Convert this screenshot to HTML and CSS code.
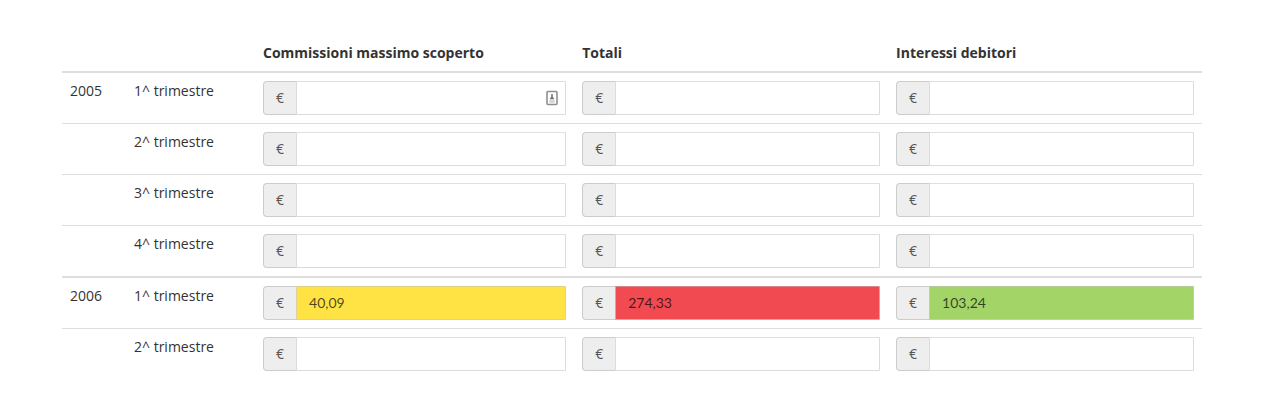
FILE: index.html
```html
<!DOCTYPE html>
<html lang="it">

<head>
	<meta charset="UTF-8">
	<meta name="viewport" content="width=device-width, initial-scale=1.0">
	<title>Trimestri</title>
	<link rel="stylesheet" href="styles.css">
</head>

<body>
	<table class="table">
		<colgroup>
			<col class="col-year">
			<col class="col-quarter">
			<col class="col-fees">
			<col>
			<col>
		</colgroup>
		<thead>
			<tr>
				<th></th>
				<th></th>
				<th>Commissioni massimo scoperto</th>
				<th>Totali</th>
				<th>Interessi debitori</th>
			</tr>
		</thead>
		<tbody>
			<tr>
				<td>2005</td>
				<td>1^ trimestre</td>
				<td>
					<div class="input-group">
						<label class="addon" for="fees-2005-1">€</label>
						<input type="text" class="form-control" id="fees-2005-1">
						<svg class="autofill" width="12" height="16" viewBox="0 0 12 16">
							<rect x="1" y="1.5" width="10" height="13" rx="1" fill="#fff" stroke="#8f8f8f" stroke-width="1.6" />
							<path d="M6 4v3" stroke="#777" stroke-width="1.6" />
							<path d="M3.8 9l1.2-2.2h2l1.2 2.2z" fill="#777" />
							<path d="M3.5 10h5M3.5 12h5" stroke="#aaa" stroke-width="1" />
						</svg>
					</div>
				</td>
				<td>
					<div class="input-group">
						<label class="addon" for="total-2005-1">€</label>
						<input type="text" class="form-control" id="total-2005-1">
					</div>
				</td>
				<td>
					<div class="input-group">
						<label class="addon" for="interest-2005-1">€</label>
						<input type="text" class="form-control" id="interest-2005-1">
					</div>
				</td>
			</tr>
			<tr>
				<td></td>
				<td>2^ trimestre</td>
				<td>
					<div class="input-group">
						<label class="addon" for="fees-2005-2">€</label>
						<input type="text" class="form-control" id="fees-2005-2">
					</div>
				</td>
				<td>
					<div class="input-group">
						<label class="addon" for="total-2005-2">€</label>
						<input type="text" class="form-control" id="total-2005-2">
					</div>
				</td>
				<td>
					<div class="input-group">
						<label class="addon" for="interest-2005-2">€</label>
						<input type="text" class="form-control" id="interest-2005-2">
					</div>
				</td>
			</tr>
			<tr>
				<td></td>
				<td>3^ trimestre</td>
				<td>
					<div class="input-group">
						<label class="addon" for="fees-2005-3">€</label>
						<input type="text" class="form-control" id="fees-2005-3">
					</div>
				</td>
				<td>
					<div class="input-group">
						<label class="addon" for="total-2005-3">€</label>
						<input type="text" class="form-control" id="total-2005-3">
					</div>
				</td>
				<td>
					<div class="input-group">
						<label class="addon" for="interest-2005-3">€</label>
						<input type="text" class="form-control" id="interest-2005-3">
					</div>
				</td>
			</tr>
			<tr>
				<td></td>
				<td>4^ trimestre</td>
				<td>
					<div class="input-group">
						<label class="addon" for="fees-2005-4">€</label>
						<input type="text" class="form-control" id="fees-2005-4">
					</div>
				</td>
				<td>
					<div class="input-group">
						<label class="addon" for="total-2005-4">€</label>
						<input type="text" class="form-control" id="total-2005-4">
					</div>
				</td>
				<td>
					<div class="input-group">
						<label class="addon" for="interest-2005-4">€</label>
						<input type="text" class="form-control" id="interest-2005-4">
					</div>
				</td>
			</tr>
		</tbody>
		<tbody>
			<tr>
				<td>2006</td>
				<td>1^ trimestre</td>
				<td>
					<div class="input-group">
						<label class="addon" for="fees-2006-1">€</label>
						<input type="text" class="form-control warning" id="fees-2006-1" value="40,09">
					</div>
				</td>
				<td>
					<div class="input-group">
						<label class="addon" for="total-2006-1">€</label>
						<input type="text" class="form-control danger" id="total-2006-1" value="274,33">
					</div>
				</td>
				<td>
					<div class="input-group">
						<label class="addon" for="interest-2006-1">€</label>
						<input type="text" class="form-control success" id="interest-2006-1" value="103,24">
					</div>
				</td>
			</tr>
			<tr>
				<td></td>
				<td>2^ trimestre</td>
				<td>
					<div class="input-group">
						<label class="addon" for="fees-2006-2">€</label>
						<input type="text" class="form-control" id="fees-2006-2">
					</div>
				</td>
				<td>
					<div class="input-group">
						<label class="addon" for="total-2006-2">€</label>
						<input type="text" class="form-control" id="total-2006-2">
					</div>
				</td>
				<td>
					<div class="input-group">
						<label class="addon" for="interest-2006-2">€</label>
						<input type="text" class="form-control" id="interest-2006-2">
					</div>
				</td>
			</tr>
		</tbody>
	</table>
</body>

</html>
```
FILE: styles.css
```css
* {
	box-sizing: border-box;
}

body {
	margin: 0;
	padding: 35px 78px 22px 62px;
	font-family: 'Open Sans', sans-serif;
	font-size: 14px;
	line-height: 20px;
	color: #333;
	background-color: #fff;
}

.table {
	width: 100%;
	table-layout: fixed;
	border-spacing: 0;
}

.col-year {
	width: 64px;
}

.col-quarter {
	width: 129px;
}

.col-fees {
	width: 28%;
}

.table th,
.table td {
	padding: 8px;
	text-align: left;
	vertical-align: top;
}

.table td {
	border-top: 1px solid #ddd;
}

.table tbody tr:first-child td {
	border-top: 2px solid #ddd;
}

.input-group {
	position: relative;
	display: flex;
	height: 34px;
}

.addon {
	padding: 6px 12px;
	border: 1px solid #ccc;
	border-right: 0;
	border-radius: 4px 0 0 4px;
	background-color: #eee;
	color: #555;
}

.form-control {
	flex: 1;
	min-width: 0;
	padding: 5px 12px 7px;
	border: 1px solid rgba(204, 204, 204, 0.7);
	border-top-color: rgba(190, 190, 190, 0.5);
	border-radius: 0 1px 1px 0;
	font-family: 'Lato', sans-serif;
	font-size: 14px;
	color: rgba(0, 0, 0, 0.7);
	background-color: #fff;
}

.warning {
	background-color: #ffe345;
}

.danger {
	background-color: #f14a51;
}

.success {
	background-color: #a3d468;
}

.autofill {
	position: absolute;
	top: 9px;
	right: 8px;
}
```
